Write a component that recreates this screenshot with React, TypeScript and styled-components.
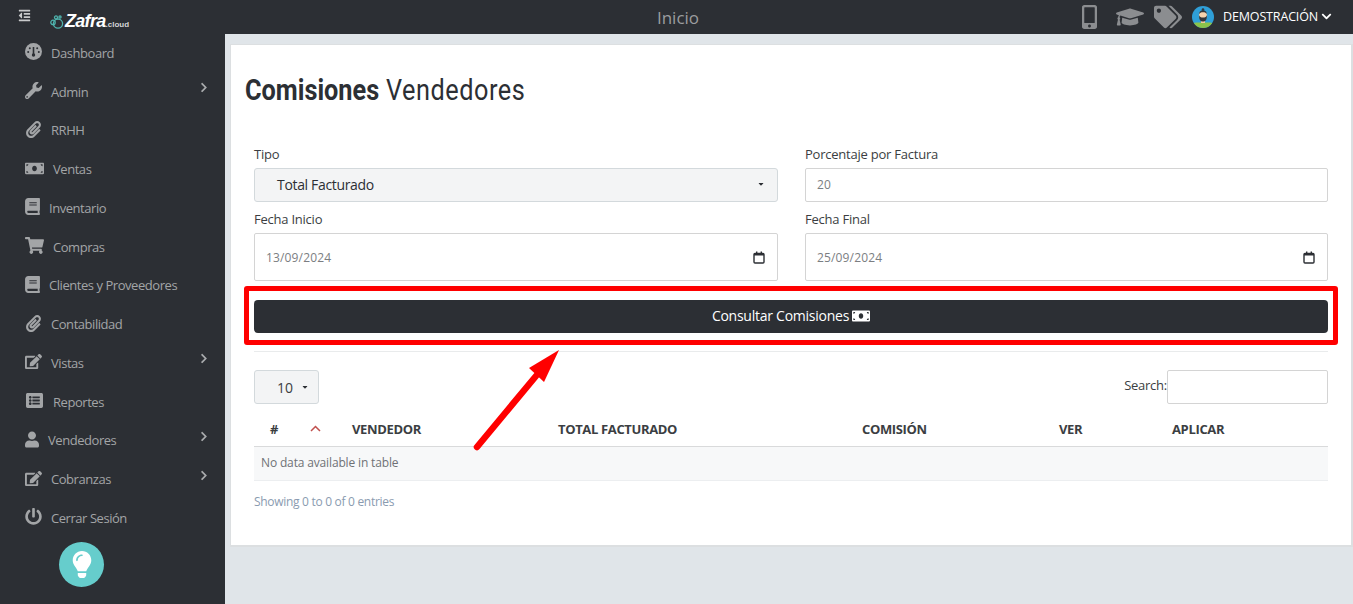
import React from 'react';
import styled, { createGlobalStyle } from 'styled-components';
import {
  FaBook,
  FaCaretDown,
  FaChevronDown,
  FaChevronRight,
  FaEdit,
  FaGraduationCap,
  FaLightbulb,
  FaListAlt,
  FaMobileAlt,
  FaMoneyBill,
  FaOutdent,
  FaPaperclip,
  FaPowerOff,
  FaShoppingCart,
  FaTags,
  FaUser,
  FaWrench,
} from 'react-icons/fa';

const Color = {
  Dark: '#2c2f34',
  Page: '#e0e5e9',
  SideText: '#a3a5a7',
  Line: '#d4d4d4',
  Red: '#ff0000',
};

const DashboardIcon = (): JSX.Element => (
  <svg viewBox="0 0 17 17">
    <circle cx="8.500" cy="8.500" r="8.500" fill="currentColor" />
    <path d="M8.500 4v7" stroke={Color.Dark} strokeWidth="1.600" />
    <circle cx="8.500" cy="12" r="1.700" fill={Color.Dark} />
    <circle cx="4.800" cy="5.200" r="1" fill={Color.Dark} />
    <circle cx="12.200" cy="5.200" r="1" fill={Color.Dark} />
    <circle cx="3.200" cy="9" r="1" fill={Color.Dark} />
    <circle cx="13.800" cy="9" r="1" fill={Color.Dark} />
  </svg>
);

interface MenuEntry {
  text: string;
  icon: React.ComponentType;
  iconWidth: number;
  hasChildren?: boolean;
}

const MENU: MenuEntry[] = [
  { text: 'Dashboard', icon: DashboardIcon, iconWidth: 17 },
  { text: 'Admin', icon: FaWrench, iconWidth: 17, hasChildren: true },
  { text: 'RRHH', icon: FaPaperclip, iconWidth: 17 },
  { text: 'Ventas', icon: FaMoneyBill, iconWidth: 19 },
  { text: 'Inventario', icon: FaBook, iconWidth: 15 },
  { text: 'Compras', icon: FaShoppingCart, iconWidth: 19 },
  { text: 'Clientes y Proveedores', icon: FaBook, iconWidth: 15 },
  { text: 'Contabilidad', icon: FaPaperclip, iconWidth: 17 },
  { text: 'Vistas', icon: FaEdit, iconWidth: 17, hasChildren: true },
  { text: 'Reportes', icon: FaListAlt, iconWidth: 19 },
  { text: 'Vendedores', icon: FaUser, iconWidth: 14, hasChildren: true },
  { text: 'Cobranzas', icon: FaEdit, iconWidth: 17, hasChildren: true },
  { text: 'Cerrar Sesión', icon: FaPowerOff, iconWidth: 17 },
];

const COLUMNS = [
  { text: '#', width: 46 },
  { text: '', width: 36 },
  { text: 'VENDEDOR', width: 206 },
  { text: 'TOTAL FACTURADO', width: 304 },
  { text: 'COMISIÓN', width: 197 },
  { text: 'VER', width: 113 },
  { text: 'APLICAR', width: 172 },
];

const GlobalStyle = createGlobalStyle`
  html, body {
    margin: 0;
    padding: 0;
    height: 100%;
    overflow: hidden;
    background: ${Color.Page};
    font-family: "Open Sans", "Liberation Sans", sans-serif;
  }
  * { box-sizing: border-box; }
`;

const Page = styled.div`
  width: 1353px;
  height: 604px;
  display: flex;
  flex-direction: column;
`;

const Navbar = styled.header`
  height: 34px;
  flex: none;
  display: flex;
  align-items: center;
  background: ${Color.Dark};
`;

const NavLeft = styled.div`
  width: 225px;
  height: 100%;
  flex: none;
  display: flex;
  padding-left: 18px;
`;

const Toggle = styled(FaOutdent)`
  width: 13px;
  height: 13px;
  margin-top: 9px;
  color: #c9cacb;
`;

const Logo = styled.div`
  display: flex;
  align-items: flex-end;
  height: 15px;
  margin: 14px 0 0 19px;
`;

const LogoName = styled.span`
  font-family: "Liberation Sans", sans-serif;
  font-size: 18px;
  font-weight: 700;
  font-style: italic;
  letter-spacing: -0.7px;
  line-height: 15px;
  color: #ffffff;
  margin-left: 1px;
`;

const LogoSuffix = styled.span`
  font-family: "Liberation Sans", sans-serif;
  font-size: 8px;
  font-weight: 700;
  line-height: 9px;
  color: #d5d6d7;
`;

const NavTitle = styled.div`
  flex: 1;
  text-align: center;
  font-size: 17px;
  color: #9b9d9f;
  padding-left: 50px;
`;

const NavRight = styled.div`
  width: 272px;
  flex: none;
  display: flex;
  align-items: center;
`;

const NavIcon = styled.span<{ $width: number; $gap: number }>`
  display: flex;
  width: ${(p) => p.$width}px;
  margin-right: ${(p) => p.$gap}px;
  color: #8b8d90;
  svg {
    width: 100%;
    height: 24px;
  }
`;

const UserName = styled.span`
  font-size: 12.5px;
  letter-spacing: -0.15px;
  color: #ffffff;
  margin: -2px 0 0 9px;
`;

const UserCaret = styled(FaChevronDown)`
  width: 11px;
  height: 11px;
  margin: -2px 0 0 3px;
  color: #ffffff;
`;

const Body = styled.div`
  flex: 1;
  display: flex;
  min-height: 0;
`;

const Sidebar = styled.nav`
  width: 225px;
  flex: none;
  background: ${Color.Dark};
  display: flex;
  flex-direction: column;
`;

const MenuList = styled.div`
  margin-top: -0.4px;
`;

const MenuItem = styled.div`
  height: 38.75px;
  display: flex;
  align-items: center;
  gap: 9px;
  padding: 0 16px 0 25px;
  font-size: 13px;
  letter-spacing: -0.45px;
  color: ${Color.SideText};
`;

const MenuIcon = styled.span<{ $width: number }>`
  display: flex;
  width: ${(p) => p.$width}px;
  margin-top: -2px;
  svg {
    width: 100%;
    height: 17px;
  }
`;

const MenuText = styled.span`
  flex: 1;
`;

const MenuCaret = styled(FaChevronRight)`
  width: 10px;
  height: 11px;
  margin-top: -8px;
  color: #a9abad;
`;

const HelpButton = styled.div`
  width: 45px;
  height: 45px;
  margin: 5px 0 0 59px;
  border-radius: 50%;
  background: #66cdcc;
  color: #ffffff;
  display: flex;
  align-items: center;
  justify-content: center;
  svg {
    width: 22px;
    height: 27px;
  }
`;

const Main = styled.main`
  flex: 1;
  padding: 10px 0 0 5px;
`;

const Card = styled.section`
  position: relative;
  height: 503px;
  background: #ffffff;
  border: 1px solid #dcdfe1;
  border-width: 1px 2px 2px 1px;
  padding: 30px 23px 0 23px;
`;

const Title = styled.h1`
  margin: 0 0 39px -9px;
  height: 30px;
  font-family: Roboto, sans-serif;
  font-size: 29px;
  line-height: 30px;
  font-weight: 400;
  letter-spacing: 0.6px;
  color: #2c2f34;
  white-space: nowrap;
  transform: scaleX(0.872);
  transform-origin: left center;
  b {
    font-weight: 700;
    letter-spacing: 0;
  }
`;

const FormGrid = styled.div`
  display: grid;
  grid-template-columns: 524px 523px;
  column-gap: 27px;
  row-gap: 7px;
`;

const Label = styled.label`
  display: block;
  font-size: 13px;
  letter-spacing: -0.23px;
  line-height: 20px;
  margin-bottom: 4px;
  color: #3b3e42;
`;

const SelectBox = styled.div`
  height: 34px;
  display: flex;
  align-items: center;
  justify-content: space-between;
  padding: 0 12px 2px 22px;
  background: #f3f4f5;
  border: 1px solid #d3d9dc;
  border-radius: 3px;
  font-size: 14px;
  letter-spacing: -0.33px;
  color: #2c2f34;
`;

const SmallCaret = styled(FaCaretDown)`
  width: 8px;
  height: 8px;
  color: #2c2f34;
`;

const InputBox = styled.div<{ $tall?: boolean }>`
  height: ${(p) => (p.$tall ? 48 : 34)}px;
  display: flex;
  align-items: center;
  justify-content: space-between;
  padding: 0 12px ${(p) => (p.$tall ? 0 : 2)}px 11px;
  background: #ffffff;
  border: 1px solid ${Color.Line};
  border-radius: 2px;
  font-size: 12px;
  letter-spacing: 0.15px;
  color: #7b7e82;
`;

const ButtonWrap = styled.div`
  position: relative;
  margin-top: 19px;
`;

const PrimaryButton = styled.button`
  width: 100%;
  height: 33px;
  display: flex;
  align-items: center;
  justify-content: center;
  gap: 3px;
  border: none;
  border-radius: 4px;
  background: ${Color.Dark};
  color: #ffffff;
  font-family: inherit;
  font-size: 14px;
  letter-spacing: -0.25px;
  padding: 0 0 2px;
  svg {
    width: 18px;
    height: 18px;
  }
`;

const Highlight = styled.div`
  position: absolute;
  inset: -14px -10px -12px -10px;
  border: 5px solid ${Color.Red};
  border-radius: 3px;
  pointer-events: none;
`;

const Divider = styled.hr`
  margin: 18px 0 18px;
  border: none;
  border-top: 1px solid #e9ebec;
`;

const TableControls = styled.div`
  display: flex;
  justify-content: space-between;
  align-items: center;
`;

const LengthSelect = styled.div`
  width: 65px;
  height: 34px;
  display: flex;
  align-items: center;
  gap: 8px;
  padding-left: 22px;
  background: #f3f4f5;
  border: 1px solid #d3d9dc;
  border-radius: 3px;
  font-size: 14px;
  color: #3b3e42;
`;

const SearchGroup = styled.div`
  display: flex;
  align-items: center;
  font-size: 13px;
  letter-spacing: -0.25px;
  color: #3b3e42;
`;

const SearchLabel = styled.span`
  margin-bottom: 4px;
`;

const SearchInput = styled.div`
  width: 161px;
  height: 34px;
  background: #ffffff;
  border: 1px solid ${Color.Line};
  border-radius: 2px;
`;

const Table = styled.table`
  width: 100%;
  table-layout: fixed;
  border-collapse: collapse;
  margin-top: 8px;
`;

const HeadCell = styled.th<{ $width: number }>`
  width: ${(p) => p.$width}px;
  height: 34px;
  padding: 0 0 0 16px;
  text-align: left;
  font-size: 13px;
  font-weight: 700;
  letter-spacing: -0.35px;
  color: #3b3e42;
  border-bottom: 1px solid #d9dadb;
`;

const SortArrow = styled.svg`
  display: block;
  width: 11px;
  height: 7px;
  margin-left: -6px;
`;

const EmptyCell = styled.td`
  height: 34px;
  padding: 0 0 2px 7px;
  font-size: 12px;
  letter-spacing: -0.15px;
  color: #6f7276;
  background: #f7f8f9;
  border-bottom: 1px solid #eceef0;
`;

const TableInfo = styled.div`
  margin-top: 12px;
  font-size: 12px;
  letter-spacing: -0.3px;
  line-height: 18px;
  color: #8a9bb0;
`;

const Arrow = styled.svg`
  position: absolute;
  left: 237px;
  top: 300px;
  width: 100px;
  height: 110px;
`;

const CalendarIcon = (): JSX.Element => (
  <svg width="12" height="13" viewBox="0 0 12 13" fill="none">
    <rect x="1" y="2.500" width="10" height="9.500" rx="1" stroke="#2c2f34" strokeWidth="1.400" />
    <rect x="1" y="2" width="10" height="2.500" fill="#2c2f34" />
    <rect x="3" y="0.500" width="1.400" height="2" fill="#2c2f34" />
    <rect x="7.600" y="0.500" width="1.400" height="2" fill="#2c2f34" />
  </svg>
);

const Bubbles = (): JSX.Element => (
  <svg width="14" height="14" viewBox="0 0 14 14" fill="none" stroke="#4fb3ad" strokeWidth="1.300">
    <circle cx="8" cy="8.600" r="4.600" />
    <circle cx="3" cy="7.400" r="2.200" />
    <circle cx="6" cy="2.400" r="1.500" />
    <circle cx="10" cy="2" r="1.100" />
  </svg>
);

const Avatar = (): JSX.Element => (
  <svg width="22" height="22" viewBox="0 0 22 22">
    <defs>
      <clipPath id="avatar-clip">
        <circle cx="11" cy="11" r="11" />
      </clipPath>
    </defs>
    <g clipPath="url(#avatar-clip)">
      <rect width="22" height="22" fill="#2f9fd8" />
      <rect x="1" y="16.500" width="20" height="7" rx="3" fill="#8bc34a" />
      <rect x="9" y="13" width="4" height="4" fill="#f2c9a0" />
      <ellipse cx="11" cy="9.500" rx="4" ry="4.600" fill="#f6d3ae" />
      <path d="M7 9c0 5 1.500 6.500 4 6.500S15 14 15 9c-.6 2-1.800 2.600-4 2.600S7.600 11 7 9z" fill="#33383d" />
      <path d="M7.200 8c0-2.600 1.600-3.800 3.800-3.800S14.800 5.400 14.800 8c-1-1.300-2.200-1.700-3.800-1.700S8.200 6.700 7.200 8z" fill="#33383d" />
      <circle cx="11" cy="3.600" r="1.300" fill="#33383d" />
    </g>
  </svg>
);

const App = (): JSX.Element => {
  const renderMenu = (): JSX.Element[] => {
    return MENU.map(
      (val): JSX.Element => {
        const Icon = val.icon;
        return (
          <MenuItem key={val.text}>
            <MenuIcon $width={val.iconWidth}>
              <Icon />
            </MenuIcon>
            <MenuText>{val.text}</MenuText>
            {val.hasChildren && <MenuCaret />}
          </MenuItem>
        );
      }
    );
  };

  return (
    <Page>
      <GlobalStyle />
      <Navbar>
        <NavLeft>
          <Toggle />
          <Logo>
            <Bubbles />
            <LogoName>Zafra</LogoName>
            <LogoSuffix>.cloud</LogoSuffix>
          </Logo>
        </NavLeft>
        <NavTitle>Inicio</NavTitle>
        <NavRight>
          <NavIcon $width={17} $gap={18}>
            <FaMobileAlt />
          </NavIcon>
          <NavIcon $width={28} $gap={10}>
            <FaGraduationCap />
          </NavIcon>
          <NavIcon $width={28} $gap={10}>
            <FaTags />
          </NavIcon>
          <Avatar />
          <UserName>DEMOSTRACIÓN</UserName>
          <UserCaret />
        </NavRight>
      </Navbar>
      <Body>
        <Sidebar>
          <MenuList>{renderMenu()}</MenuList>
          <HelpButton>
            <FaLightbulb />
          </HelpButton>
        </Sidebar>
        <Main>
          <Card>
            <Title>
              <b>Comisiones</b> Vendedores
            </Title>
            <FormGrid>
              <div>
                <Label>Tipo</Label>
                <SelectBox>
                  Total Facturado
                  <SmallCaret />
                </SelectBox>
              </div>
              <div>
                <Label>Porcentaje por Factura</Label>
                <InputBox>20</InputBox>
              </div>
              <div>
                <Label>Fecha Inicio</Label>
                <InputBox $tall>
                  13/09/2024
                  <CalendarIcon />
                </InputBox>
              </div>
              <div>
                <Label>Fecha Final</Label>
                <InputBox $tall>
                  25/09/2024
                  <CalendarIcon />
                </InputBox>
              </div>
            </FormGrid>
            <ButtonWrap>
              <PrimaryButton>
                Consultar Comisiones <FaMoneyBill />
              </PrimaryButton>
              <Highlight />
            </ButtonWrap>
            <Divider />
            <TableControls>
              <LengthSelect>
                10
                <SmallCaret />
              </LengthSelect>
              <SearchGroup>
                <SearchLabel>Search:</SearchLabel>
                <SearchInput />
              </SearchGroup>
            </TableControls>
            <Table>
              <thead>
                <tr>
                  {COLUMNS.map(
                    (col, index): JSX.Element => (
                      <HeadCell key={index} $width={col.width}>
                        {index === 1 ? (
                          <SortArrow viewBox="0 0 11 7" fill="none">
                            <path d="M1 6l4.500-4.500L10 6" stroke="#c0504d" strokeWidth="1.500" />
                          </SortArrow>
                        ) : (
                          col.text
                        )}
                      </HeadCell>
                    )
                  )}
                </tr>
              </thead>
              <tbody>
                <tr>
                  <EmptyCell colSpan={7}>No data available in table</EmptyCell>
                </tr>
              </tbody>
            </Table>
            <TableInfo>Showing 0 to 0 of 0 entries</TableInfo>
            <Arrow viewBox="0 0 100 110" fill="none">
              <path d="M9 102L68 31" stroke={Color.Red} strokeWidth="6.500" strokeLinecap="round" />
              <path d="M91 5L61 23L76 37z" fill={Color.Red} />
            </Arrow>
          </Card>
        </Main>
      </Body>
    </Page>
  );
};

export default App;
